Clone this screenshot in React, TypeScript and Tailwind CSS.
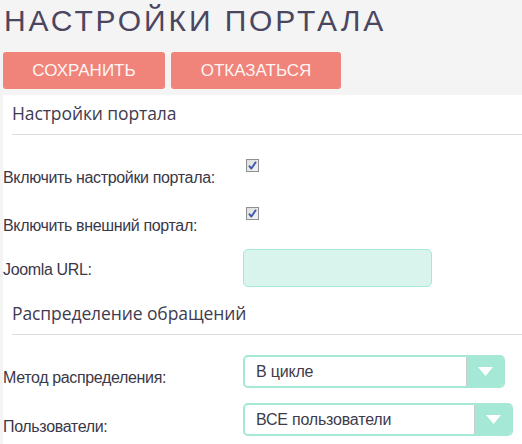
import { ChangeEvent, useState } from "react";

const Checkbox = () => (
  <span className="mt-[24px] ml-[3px] flex h-[13px] w-[13px] items-center justify-center border border-[#8e8f8f] bg-gradient-to-br from-[#dcdde0] to-[#f4f4f6]">
    <svg width="9" height="9" viewBox="0 0 9 9">
      <path d="M1 4.6 L3.4 7.6 L8 0.8" fill="none" stroke="#3b55a5" strokeWidth="1.8" strokeLinejoin="round" />
    </svg>
  </span>
);

const Select = ({ value, width }: { value: string; width: string }) => (
  <div className={`mt-[20px] flex h-[33px] overflow-hidden rounded-[5px] border-2 border-[#a6e8d6] bg-white ${width}`}>
    <div className="flex flex-1 items-center pl-[11px] text-[16px] tracking-[-0.2px] text-[#3d3b4c]">{value}</div>
    <div className="flex w-[37px] items-center justify-center border-l border-[#c9cccb] bg-[#a6e8d6]">
      <svg width="15" height="9" viewBox="0 0 15 9">
        <path d="M0 0 H15 L7.5 9 Z" fill="#ffffff" />
      </svg>
    </div>
  </div>
);

const SectionTitle = ({ title }: { title: string }) => (
  <div className="ml-[9px] flex h-[40px] items-center border-b border-[#dcdcdc] pb-[3px] text-[17.5px] tracking-[-0.1px] text-[#3f3b50] [font-family:'Open_Sans',sans-serif]">
    {title}
  </div>
);

export default function App() {
  const [url, setUrl] = useState("");

  return (
    <div className="min-h-screen bg-[#f4f4f4] [font-family:'Liberation_Sans',Arial,sans-serif]">
      {/* Header */}
      <h1 className="pt-[3px] pl-[4px] text-[30px] leading-[36px] tracking-[2.9px] text-[#4b4660]">
        НАСТРОЙКИ ПОРТАЛА
      </h1>
      <div className="mt-[13px] flex gap-[6px] pl-[3px]">
        <button className="h-[37px] w-[162px] rounded-[3px] bg-[#f0837a] text-[17px] text-[#fff6f4]">СОХРАНИТЬ</button>
        <button className="h-[37px] w-[170px] rounded-[3px] bg-[#f0837a] text-[17px] text-[#fff6f4]">ОТКАЗАТЬСЯ</button>
      </div>

      {/* Form panel */}
      <div className="mt-[6px] ml-[3px] bg-white pb-[10px] text-[16px] leading-[20px] tracking-[-0.35px] text-[#3a3848]">
        <SectionTitle title="Настройки портала" />

        <div className="flex h-[48px]">
          <div className="w-[240px] pt-[33px]">Включить настройки портала:</div>
          <Checkbox />
        </div>
        <div className="flex h-[48px]">
          <div className="w-[240px] pt-[33px]">Включить внешний портал:</div>
          <Checkbox />
        </div>
        <div className="flex h-[64px]">
          <div className="w-[240px] pt-[29px]">Joomla URL:</div>
          <input
            value={url}
            onChange={(e: ChangeEvent<HTMLInputElement>) => setUrl(e.target.value)}
            className="mt-[18px] h-[38px] w-[189px] rounded-[5px] border border-[#a8e8d6] bg-[#d9f4ec] px-2 outline-none"
          />
        </div>

        <SectionTitle title="Распределение обращений" />

        <div className="flex h-[48px]">
          <div className="w-[240px] pt-[33px]">Метод распределения:</div>
          <Select value="В цикле" width="w-[262px]" />
        </div>
        <div className="flex h-[54px]">
          <div className="w-[240px] pt-[34px]">Пользователи:</div>
          <Select value="ВСЕ пользователи" width="w-[270px]" />
        </div>
      </div>
    </div>
  );
}
